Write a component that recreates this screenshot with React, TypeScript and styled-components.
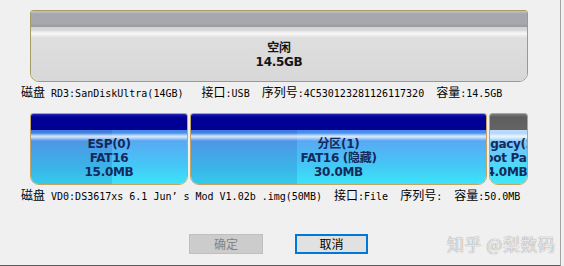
import React from 'react';
import styled, { createGlobalStyle } from 'styled-components';

type Part = {
  name: string;
  fs: string;
  size: string;
  width: number;
  used: number;
  raw?: boolean;
};

const parts: Part[] = [
  { name: 'ESP(0)', fs: 'FAT16', size: '15.0MB', width: 158, used: 52 },
  { name: '分区(1)', fs: 'FAT16 (隐藏)', size: '30.0MB', width: 297, used: 36 },
  { name: 'Legacy(2)', fs: 'Boot Part', size: '4.0MB', width: 39, used: 0, raw: true },
];

// SimSun style caption: ascii half width, han full width
function mixed(text: string) {
  return text.split(/([\u3000-\u9fff\uff00-\uffef]+|’)/).map((chunk, i) => {
    if (!chunk) return null;
    if (chunk === '’') return <Quote key={i}>’</Quote>;
    if (/[\u3000-\u9fff\uff00-\uffef]/.test(chunk)) return <Han key={i}>{chunk}</Han>;
    return chunk;
  });
}

export default function App() {
  return (
    <>
      <GlobalStyle />
      <Window>
        <DiskRow>
          <Block $free $width={498}>
            <Head $free />
            <Body $free $used={0}>
              <Label $free>
                <span>空闲</span>
                <span>14.5GB</span>
              </Label>
            </Body>
          </Block>
        </DiskRow>
        <Caption>
          {mixed('磁盘 RD3:SanDiskUltra(14GB)   接口:USB  序列号:4C530123281126117320  容量:14.5GB')}
        </Caption>

        <DiskRow $gap>
          {parts.map(p => (
            <Block key={p.name} $width={p.width}>
              <Head $raw={p.raw} />
              <Body $raw={p.raw} $used={p.used}>
                <Label $raw={p.raw}>
                  <span>{p.name}</span>
                  <span>{p.fs}</span>
                  <span>{p.size}</span>
                </Label>
              </Body>
            </Block>
          ))}
        </DiskRow>
        <Caption>
          {mixed('磁盘 VD0:DS3617xs 6.1 Jun’s Mod V1.02b .img(50MB)  接口:File  序列号:  容量:50.0MB')}
        </Caption>

        <ButtonRow>
          <Button disabled>确定</Button>
          <Button $primary>取消</Button>
          <Watermark>知乎 @梨数码</Watermark>
        </ButtonRow>
      </Window>
    </>
  );
}

const GlobalStyle = createGlobalStyle`
  html, body {
    margin: 0;
    background: #f0f0f0;
  }
`;

const Window = styled.div`
  width: 561px;
  height: 266px;
  box-sizing: border-box;
  padding-top: 10px;
  border-right: 1px solid #a3a3a3;
  border-bottom: 1px solid #5a5a5a;
  display: flex;
  flex-direction: column;
`;

const DiskRow = styled.div<{ $gap?: boolean }>`
  display: flex;
  gap: 2px;
  margin: ${p => (p.$gap ? '15px' : '0')} 0 0 30px;
  height: 72px;
`;

const Block = styled.div<{ $width: number; $free?: boolean }>`
  flex: 0 0 ${p => p.$width}px;
  box-sizing: border-box;
  display: flex;
  flex-direction: column;
  overflow: hidden;
  border: 1px solid ${p => (p.$free ? '#a49c62' : '#c4a464')};
  border-radius: 3px 3px 9px 9px;
`;

const Head = styled.div<{ $free?: boolean; $raw?: boolean }>`
  flex: 0 0 16px;
  background: ${p =>
    p.$free
      ? 'linear-gradient(#c4c4c8, #a6a6ae 3px, #a8a8ae 12px, #9a9a9e)'
      : p.$raw
      ? 'linear-gradient(#7a7a7a, #5e5e5e 3px, #646464)'
      : 'linear-gradient(#2424b4, #00009a 3px, #000090)'};
`;

const Body = styled.div<{ $free?: boolean; $raw?: boolean; $used: number }>`
  flex: 1;
  display: flex;
  align-items: center;
  justify-content: center;
  background:
    linear-gradient(to bottom, transparent 3px, rgba(255, 255, 255, 0.75) 6px, rgba(255, 255, 255, 0.75) 7px, transparent 11px),
    linear-gradient(to right, rgba(0, 30, 140, 0.13) ${p => p.$used}%, transparent ${p => p.$used}%),
    ${p =>
      p.$free
        ? 'linear-gradient(#d4d4d4, #dedede 12px, #d8d8d8)'
        : p.$raw
        ? 'linear-gradient(#c0dcf8, #78c4f8 14px, #48dcf8 40px, #40e8f8)'
        : 'linear-gradient(#4488ea, #58aaf4 12px, #44c8f6 36px, #3ce4f8)'};
`;

const Label = styled.div<{ $free?: boolean; $raw?: boolean }>`
  display: flex;
  flex-direction: column;
  align-items: center;
  white-space: nowrap;
  font: bold 12px/14px 'DejaVu Sans', 'Noto Sans CJK SC', sans-serif;
  letter-spacing: -0.3px;
  color: ${p => (p.$free ? '#151515' : '#122a5c')};
  margin-top: 2px;
  margin-right: ${p => (p.$raw ? '3px' : '0')};
`;

const Caption = styled.div`
  margin: 4px 0 0 21px;
  height: 12px;
  font: 10px/12px 'DejaVu Sans Mono', monospace;
  color: #000;
  white-space: pre;
`;

const Han = styled.span`
  font: 12px/12px 'Noto Sans CJK SC', sans-serif;
`;

const Quote = styled.span`
  display: inline-block;
  width: 12px;
  font: 10px/12px 'DejaVu Sans Mono', monospace;
`;

const ButtonRow = styled.div`
  display: flex;
  align-items: center;
  gap: 32px;
  margin: 33px 0 0 189px;
`;

const Button = styled.button<{ $primary?: boolean }>`
  width: ${p => (p.$primary ? 73 : 74)}px;
  height: 20px;
  box-sizing: border-box;
  padding: 0;
  font: 12px/16px 'Noto Sans CJK SC', sans-serif;
  background: ${p => (p.$primary ? '#e1e1e1' : '#cccccc')};
  border: ${p => (p.$primary ? '2px solid #0078d7' : '1px solid #bfbfbf')};
  color: ${p => (p.$primary ? '#000' : '#838383')};
`;

const Watermark = styled.div`
  margin-left: 47px;
  font: 17px/20px 'Noto Sans CJK SC', sans-serif;
  color: rgba(250, 250, 250, 0.85);
  text-shadow: 0 0 1px rgba(0, 0, 0, 0.55);
  letter-spacing: 0.5px;
`;
